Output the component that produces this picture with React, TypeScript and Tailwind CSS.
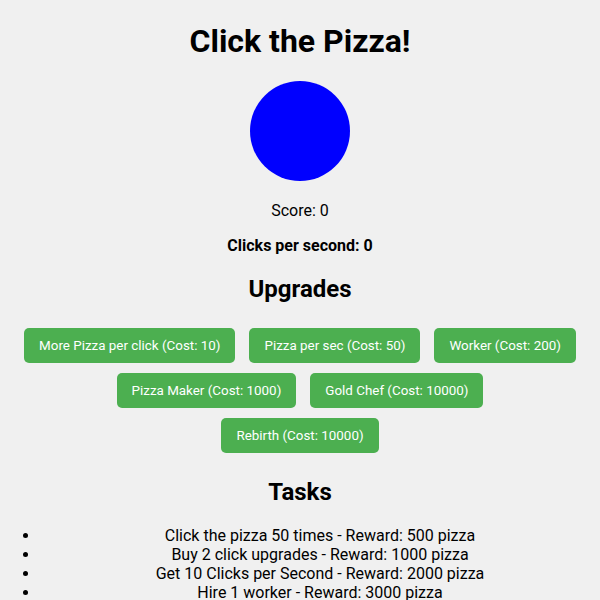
import { useState } from "react";

const upgradeRows = [
  ["More Pizza per click (Cost: 10)", "Pizza per sec (Cost: 50)", "Worker (Cost: 200)"],
  ["Pizza Maker (Cost: 1000)", "Gold Chef (Cost: 10000)"],
  ["Rebirth (Cost: 10000)"],
];

const tasks = [
  "Click the pizza 50 times - Reward: 500 pizza",
  "Buy 2 click upgrades - Reward: 1000 pizza",
  "Get 10 Clicks per Second - Reward: 2000 pizza",
  "Hire 1 worker - Reward: 3000 pizza",
];

export default function App() {
  const [score, setScore] = useState(0);

  return (
    <div className="min-h-screen bg-[#f0f0f0] text-center text-black font-['Roboto',sans-serif] overflow-hidden">
      <div className="flow-root">
        <h1 className="mt-[22.5px] mb-[21.44px] text-[32px] font-bold leading-[37.5px]">Click the Pizza!</h1>
        {/* the pizza itself */}
        <div
          onClick={() => setScore(score + 1)}
          className="mx-auto my-[20px] w-[100px] h-[100px] rounded-full bg-[#0000ff] cursor-pointer"
        ></div>
        <p className="my-4 text-base leading-[19px]">Score: {score}</p>
        <p className="my-4 text-base leading-[19px] font-bold">Clicks per second: 0</p>
        <h2 className="mt-[19.92px] mb-[24.92px] text-2xl font-bold leading-[28px]">Upgrades</h2>
        <div className="flex flex-col gap-[10px]">
          {upgradeRows.map((row, i) => (
            <div key={i} className="flex justify-center gap-[14px]">
              {row.map((u) => (
                <button
                  key={u}
                  className="bg-[#4caf50] text-white text-[13.4px] leading-[16px] px-[15px] py-[9.5px] rounded-[5px] cursor-pointer"
                >
                  {u}
                </button>
              ))}
            </div>
          ))}
        </div>
        <h2 className="mt-[24.92px] mb-[19.92px] text-2xl font-bold leading-[28px]">Tasks</h2>
        <ul className="list-disc pl-10 my-4 text-base leading-[19px]">
          {tasks.map((t) => (
            <li key={t}>{t}</li>
          ))}
        </ul>
      </div>
    </div>
  );
}
